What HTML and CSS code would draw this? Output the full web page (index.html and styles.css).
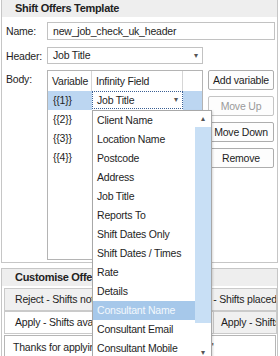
FILE: index.html
```html
<!DOCTYPE html>
<html lang="en">
<head>
    <meta charset="UTF-8">
    <title>Shift Offers Template</title>
    <link rel="stylesheet" href="styles.css">
</head>
<body>
    <div class="panel template">
        <div class="panel-title">Shift Offers Template</div>
        <div class="panel-body">
            <div class="field-row">
                <label>Name:</label>
                <div class="textbox">new_job_check_uk_header</div>
            </div>
            <div class="field-row header-row">
                <label>Header:</label>
                <div class="combo">Job Title<span class="arrow">&#9662;</span></div>
            </div>
            <div class="field-row body-row">
                <label>Body:</label>
                <div class="grid">
                    <div class="grid-row grid-head">
                        <div class="cell">Variable</div>
                        <div class="cell">Infinity Field</div>
                        <div class="cell"></div>
                    </div>
                    <div class="grid-row selected">
                        <div class="cell">{{1}}</div>
                        <div class="cell field-cell">
                            <div class="cell-combo">Job Title<span class="arrow">&#9662;</span></div>
                            <div class="droplist">
                                <div class="items">
                                    <div class="item">Client Name</div>
                                    <div class="item">Location Name</div>
                                    <div class="item">Postcode</div>
                                    <div class="item">Address</div>
                                    <div class="item">Job Title</div>
                                    <div class="item">Reports To</div>
                                    <div class="item">Shift Dates Only</div>
                                    <div class="item">Shift Dates / Times</div>
                                    <div class="item">Rate</div>
                                    <div class="item">Details</div>
                                    <div class="item hot">Consultant Name</div>
                                    <div class="item">Consultant Email</div>
                                    <div class="item">Consultant Mobile</div>
                                </div>
                                <div class="scrollbar">
                                    <div class="scroll-btn">&#9652;</div>
                                    <div class="thumb"></div>
                                    <div class="track"></div>
                                    <div class="scroll-btn">&#9662;</div>
                                </div>
                            </div>
                        </div>
                        <div class="cell"></div>
                    </div>
                    <div class="grid-row">
                        <div class="cell">{{2}}</div>
                        <div class="cell"></div>
                        <div class="cell"></div>
                    </div>
                    <div class="grid-row">
                        <div class="cell">{{3}}</div>
                        <div class="cell"></div>
                        <div class="cell"></div>
                    </div>
                    <div class="grid-row">
                        <div class="cell">{{4}}</div>
                        <div class="cell"></div>
                        <div class="cell"></div>
                    </div>
                </div>
                <div class="grid-buttons">
                    <button>Add variable</button>
                    <button disabled>Move Up</button>
                    <button>Move Down</button>
                    <button>Remove</button>
                </div>
            </div>
        </div>
    </div>

    <div class="panel offers">
        <div class="panel-title">Customise Offer Messages</div>
        <div class="tabs">
            <div class="tab-row">
                <div class="tab wide">Reject - Shifts not available</div>
                <div class="tab">Reject - Shifts placed</div>
            </div>
            <div class="tab-row">
                <div class="tab active wide2">Apply - Shifts available</div>
                <div class="tab">Apply - Shifts placed</div>
            </div>
        </div>
        <div class="message">Thanks for applying for all these shifts at the '</div>
    </div>
</body>
</html>
```

FILE: styles.css
```css
body {
    margin: 0;
    font-family: 'Liberation Sans', Arial, sans-serif;
    font-size: 10.5px;
    letter-spacing: -0.2px;
    color: #1e1e1e;
    background: #fff;
    width: 280px;
    height: 356px;
    overflow: hidden;
}
.panel {
    margin: 0 2px 0 1px;
    border: 1px solid #c6c6c6;
}
.template {
    margin-top: -1px;
}
.panel-title {
    height: 17px;
    line-height: 17px;
    padding-left: 13px;
    background: #eeeeee;
    font-size: 11px;
    letter-spacing: -0.3px;
    font-weight: bold;
    color: #222;
    white-space: nowrap;
    overflow: hidden;
}
.panel-body {
    padding: 5px 2px 2px 4px;
}
.field-row {
    display: flex;
    align-items: flex-start;
}
.field-row label {
    width: 41px;
    flex: none;
    line-height: 18px;
}
.header-row {
    margin-top: 7px;
}
.body-row {
    margin-top: 5px;
}
.body-row label {
    line-height: 17px;
    margin-top: 1px;
}
.textbox {
    flex: 1;
    height: 16px;
    line-height: 16px;
    border: 1px solid #c2c2c2;
    padding-left: 5px;
}
.combo {
    position: relative;
    width: 149px;
    height: 15px;
    line-height: 15px;
    border: 1px solid #c2c2c2;
    padding-left: 5px;
}
.arrow {
    position: absolute;
    right: 4px;
    top: 0;
    font-size: 8px;
    color: #555;
}
.grid {
    width: 154px;
    height: 188px;
    border: 1px solid #b4b4b4;
    flex: none;
}
.grid-row {
    display: grid;
    grid-template-columns: 44px 91px 1fr;
    height: 19px;
}
.grid-head {
    height: 20px;
}
.grid-head .cell {
    line-height: 20px;
    padding-left: 4px;
    border-right: 1px solid #d6d6d6;
}
.grid-head .cell:last-child {
    border-right: none;
}
.cell {
    line-height: 19px;
    padding-left: 5px;
}
.selected .cell:first-child,
.selected .cell:last-child {
    background: #bcd6f1;
}
.field-cell {
    position: relative;
    padding: 0;
}
.cell-combo {
    position: relative;
    height: 16px;
    line-height: 16px;
    padding-left: 4px;
    border: 1px dotted #3a5f94;
}
.droplist {
    position: absolute;
    left: 0;
    top: 19px;
    width: 118px;
    height: 250px;
    display: flex;
    background: #fff;
    border: 1px solid #a8a8a8;
    box-shadow: 1px 1px 2px rgba(0, 0, 0, 0.15);
}
.items {
    flex: 1;
}
.item {
    height: 19px;
    line-height: 19px;
    padding-left: 4px;
    white-space: nowrap;
}
.item.hot {
    background: #a6c8ea;
    color: #f3f8fd;
}
.scrollbar {
    width: 16px;
    display: flex;
    flex-direction: column;
}
.scroll-btn {
    height: 16px;
    line-height: 16px;
    text-align: center;
    font-size: 8px;
    color: #555;
}
.thumb {
    height: 196px;
    background: #c8dff5;
}
.track {
    flex: 1;
}
.grid-buttons {
    display: flex;
    flex-direction: column;
    gap: 6px;
    margin-left: 5px;
}
button {
    width: 66px;
    height: 20px;
    padding: 0;
    font-family: inherit;
    font-size: 10.5px;
    letter-spacing: -0.2px;
    color: #1e1e1e;
    background: #fdfdfd;
    border: 1px solid #adadad;
    border-radius: 2px;
}
button:disabled {
    color: #9a9a9a;
    border-color: #c4c4c4;
}
.offers {
    margin-top: 5px;
    height: 100px;
}
.tabs {
    padding: 2px 0 0 2px;
}
.tab-row {
    display: flex;
}
.tab {
    flex: 1;
    height: 21px;
    line-height: 21px;
    padding-left: 9px;
    background: #f0f0f0;
    border: 1px solid #cacaca;
    margin-left: -1px;
    white-space: nowrap;
    overflow: hidden;
}
.tab:first-child {
    margin-left: 0;
    padding-left: 10px;
}
.tab.wide {
    flex: none;
    width: 157px;
}
.tab.wide2 {
    flex: none;
    width: 198px;
}
.tab-row:last-child .tab:last-child {
    padding-left: 7px;
}
.tab.active {
    background: #fff;
}
.message {
    margin: 1px 1px 0 2px;
    height: 30px;
    padding: 5px 0 0 8px;
    border: 1px solid #b6b6b6;
    white-space: nowrap;
    overflow: hidden;
}
```
